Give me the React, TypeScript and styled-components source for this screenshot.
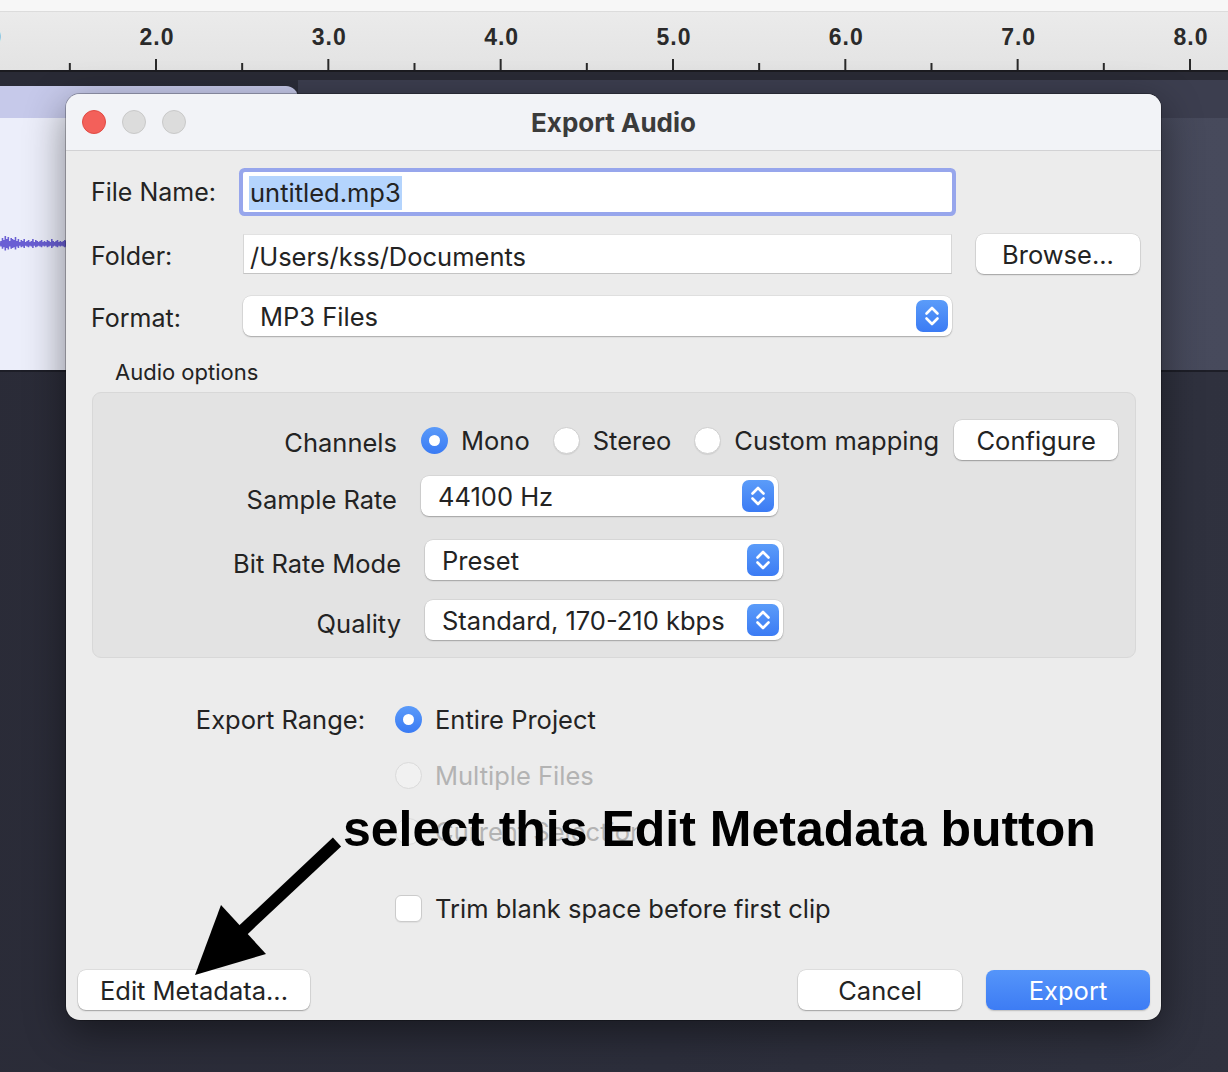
import React from "react";
import styled, { createGlobalStyle, css } from "styled-components";

const GlobalStyle = createGlobalStyle`
  html, body { margin: 0; padding: 0; }
  body {
    width: 1228px;
    height: 1072px;
    overflow: hidden;
    background: #2c2e3a;
    font-family: Inter, "Helvetica Neue", "Liberation Sans", Arial, sans-serif;
  }
  * { box-sizing: border-box; }
`;

const Page = styled.div`
  position: relative;
  width: 1228px;
  height: 1072px;
  overflow: hidden;
  display: flex;
  flex-direction: column;
  background: linear-gradient(100deg, #2a2b37 0%, #2c2e3b 60%, #30323f 100%);
`;

const TopStrip = styled.div`
  height: 12px;
  background: #f7f7f7;
  border-bottom: 1px solid #dcdcdc;
`;

const Ruler = styled.div`
  height: 60px;
  background: linear-gradient(#ebebeb, #e3e3e3);
  border-bottom: 2px solid #1b1b20;
  svg { display: block; }
`;

const TrackGap = styled.div`
  height: 8px;
  background: #292a35;
`;

const TrackRow = styled.div`
  height: 292px;
  display: flex;
  border-bottom: 2px solid #1d1e27;
`;

const Clip = styled.div`
  width: 298px;
  margin-top: 6px;
  display: flex;
  flex-direction: column;
  border-top-right-radius: 12px;
  overflow: hidden;
`;

const ClipHeader = styled.div`
  height: 32px;
  background: #c6c9ea;
`;

const ClipBody = styled.div`
  flex: 1;
  background: #eceefa;
  display: flex;
  align-items: center;
  svg { display: block; }
`;

const TrackRest = styled.div`
  flex: 1;
  display: flex;
  flex-direction: column;
`;

const TrackBand = styled.div`
  height: 38px;
  background: #3c3e4f;
`;

const TrackBody = styled.div`
  flex: 1;
  background: linear-gradient(90deg, #3f4152, #474a5c);
`;

/* ---------- Dialog ---------- */

const Dialog = styled.div`
  position: absolute;
  left: 66px;
  top: 94px;
  width: 1095px;
  height: 926px;
  border-radius: 14px;
  background: #ececec;
  overflow: hidden;
  display: flex;
  flex-direction: column;
  box-shadow: 0 0 0 1px rgba(0, 0, 0, 0.25), 0 12px 40px rgba(0, 0, 0, 0.45);
  color: #232323;
  font-size: 25px;
`;

const TitleBar = styled.div`
  height: 57px;
  flex: none;
  background: #f2f3f7;
  border-bottom: 1px solid #d2d2d4;
  display: grid;
  grid-template-columns: 1fr auto 1fr;
  align-items: center;
  padding: 0 16px;
`;

const Lights = styled.div`
  display: flex;
  gap: 16px;
`;

const Light = styled.span<{ $red?: boolean }>`
  width: 24px;
  height: 24px;
  border-radius: 50%;
  background: ${(p) => (p.$red ? "#f3605a" : "#dcdcdc")};
  border: 1px solid ${(p) => (p.$red ? "#e14a43" : "#c9c9c9")};
`;

const Title = styled.div`
  font-weight: 700;
  font-size: 26px;
  color: #3b3b3b;
`;

const Body = styled.div`
  flex: 1;
  display: flex;
  flex-direction: column;
  padding: 0 11px 10px 12px;
`;

const TopForm = styled.div`
  display: grid;
  grid-template-columns: 128px 709px 164px;
  grid-template-rows: 40px 40px 40px;
  column-gap: 24px;
  row-gap: 22px;
  margin: 21px 0 0 13px;
  align-items: center;
`;

const FormLabel = styled.div<{ $dy?: number }>`
  font-size: 25px;
  color: #232323;
  white-space: nowrap;
  transform: translateY(${(p) => p.$dy ?? 0}px);
`;

const TextField = styled.div<{ $focused?: boolean }>`
  height: 40px;
  background: #fff;
  display: flex;
  align-items: center;
  padding-left: 6px;
  font-size: 25.5px;
  ${(p) =>
    p.$focused
      ? css`
          box-shadow: 0 0 0 4px #97a6ec;
          border-radius: 2px;
          padding-top: 2px;
        `
      : css`
          border: 1px solid #d6d6d6;
          border-bottom-color: #c4c4c4;
          border-top-color: #e2e2e2;
          padding-top: 5px;
        `}
`;

const Selected = styled.span`
  background: #b4d4fd;
  line-height: 34px;
  padding: 0 1px;
`;

const PushButton = styled.button<{ $primary?: boolean; $w?: number }>`
  width: ${(p) => p.$w ?? 164}px;
  height: 40px;
  border: none;
  border-radius: 8px;
  font-family: inherit;
  font-size: 25.5px;
  padding: 0;
  background: #fff;
  color: #232323;
  box-shadow: 0 1px 1.5px rgba(0, 0, 0, 0.28), 0 0 0 0.5px rgba(0, 0, 0, 0.12);
  ${(p) =>
    p.$primary &&
    css`
      background: linear-gradient(#5595fa, #3d7cf4);
      color: #fff;
      box-shadow: 0 1px 1.5px rgba(0, 0, 0, 0.2);
    `}
`;

const SelectBox = styled.div<{ $w?: number }>`
  width: ${(p) => (p.$w ? `${p.$w}px` : "auto")};
  height: 40px;
  background: #fff;
  border-radius: 8px;
  box-shadow: 0 1px 1.5px rgba(0, 0, 0, 0.25), 0 0 0 0.5px rgba(0, 0, 0, 0.1);
  display: flex;
  align-items: center;
  justify-content: space-between;
  padding: 0 4px 0 17px;
  font-size: 25.5px;
  svg { display: block; }
`;

const SectionCaption = styled.div`
  font-size: 22px;
  color: #232323;
  margin: 23px 0 0 37px;
  line-height: 26px;
`;

const Group = styled.div`
  margin: 7px 14px 0 14px;
  height: 266px;
  background: #e3e3e3;
  border: 1px solid #d8d8d8;
  border-radius: 9px;
  padding-top: 27px;
  display: flex;
  flex-direction: column;
  font-size: 25.5px;
`;

const GroupRow = styled.div<{ $shift?: number; $mt?: number }>`
  display: flex;
  align-items: center;
  height: 40px;
  margin-top: ${(p) => p.$mt ?? 0}px;
  padding-left: ${(p) => p.$shift ?? 0}px;
`;

const GroupLabel = styled.div<{ $dy?: number }>`
  width: 304px;
  text-align: right;
  margin-right: 24px;
  transform: translateY(${(p) => p.$dy ?? 0}px);
`;

const RadioGroup = styled.div`
  display: flex;
  align-items: center;
  gap: 23px;
`;

const Option = styled.label<{ $disabled?: boolean }>`
  display: flex;
  align-items: center;
  gap: 13px;
  color: ${(p) => (p.$disabled ? "#b3b3b3" : "#232323")};
`;

type RadioState = "on" | "off" | "disabled";

const Radio = styled.span<{ $state: RadioState }>`
  position: relative;
  width: 27px;
  height: 27px;
  border-radius: 50%;
  flex: none;
  ${(p) =>
    p.$state === "on"
      ? css`
          background: linear-gradient(#5a9af9, #3a7bf4);
          &::after {
            content: "";
            position: absolute;
            left: 50%;
            top: 50%;
            width: 11px;
            height: 11px;
            margin: -5.5px 0 0 -5.5px;
            border-radius: 50%;
            background: #fff;
          }
        `
      : p.$state === "off"
      ? css`
          background: #fff;
          border: 1px solid #cfcfcf;
          box-shadow: 0 1px 1px rgba(0, 0, 0, 0.08);
        `
      : css`
          background: #f1f1f1;
          border: 1px solid #dadada;
        `}
`;

const ConfigureButton = styled(PushButton)`
  margin-left: 15px;
`;

const RangeGrid = styled.div`
  display: grid;
  grid-template-columns: 287px auto;
  grid-auto-rows: 27px;
  column-gap: 30px;
  row-gap: 29px;
  margin-top: 48px;
  align-items: center;
  font-size: 25.5px;
`;

const RangeLabel = styled.div`
  text-align: right;
`;

const TrimRow = styled.label`
  display: flex;
  align-items: center;
  gap: 13px;
  margin: 48px 0 0 317px;
  font-size: 25.5px;
`;

const CheckBox = styled.span`
  width: 27px;
  height: 27px;
  border-radius: 6px;
  background: #fff;
  border: 1px solid #cbcbcb;
  box-shadow: 0 1px 1px rgba(0, 0, 0, 0.06);
`;

const Footer = styled.div`
  margin-top: auto;
  display: flex;
  align-items: center;
  gap: 24px;
`;

const Spacer = styled.div`
  flex: 1;
`;

/* ---------- Annotation overlay ---------- */

const Annotation = styled.div`
  position: absolute;
  left: 343px;
  top: 804px;
  font-family: "Liberation Sans", Arial, sans-serif;
  font-weight: 700;
  font-size: 50px;
  line-height: 50px;
  color: #000;
  white-space: nowrap;
`;

const ArrowSvg = styled.svg`
  position: absolute;
  left: 0;
  top: 0;
  pointer-events: none;
`;

/* ---------- Drawings ---------- */

const STEP = 172.33;
const RULER_START = 157 - STEP;

function RulerDrawing() {
  const labels = [];
  const ticks = [];
  for (let i = 0; i < 8; i++) {
    const x = RULER_START + i * STEP;
    labels.push(
      <text
        key={`l${i}`}
        x={x}
        y={33}
        textAnchor="middle"
        fontFamily="'Liberation Sans', Arial, sans-serif"
        fontWeight={700}
        fontSize={23}
        letterSpacing={1}
        fill="#2a2a2a"
      >
        {`${i + 1}.0`}
      </text>
    );
    ticks.push(<line key={`t${i}`} x1={x - 1} x2={x - 1} y1={47} y2={58} stroke="#2a2a2a" strokeWidth={2} />);
    const m = x - 1 + STEP / 2;
    ticks.push(<line key={`m${i}`} x1={m} x2={m} y1={51} y2={58} stroke="#2a2a2a" strokeWidth={2} />);
  }
  return (
    <svg width={1228} height={58} viewBox="0 0 1228 58">
      {labels}
      {ticks}
    </svg>
  );
}

const WAVE = [3, 6, 4, 8, 5, 7, 3, 6, 5, 4, 7, 3, 5, 2, 4, 3, 5, 2, 3, 4, 2, 3, 5, 2, 4, 3, 2, 3, 4, 2, 3, 2, 4, 3, 2, 5, 3, 2, 3, 4, 2, 3, 2, 3, 4, 3];

function Waveform() {
  let d = "";
  WAVE.forEach((a, i) => {
    const x = 1 + i * 1.45;
    d += `M${x.toFixed(1)} ${12 - a} L${x.toFixed(1)} ${12 + a * 0.8} `;
  });
  return (
    <svg width={70} height={24} viewBox="0 0 70 24">
      <line x1={0} x2={70} y1={12} y2={12} stroke="#6a5fd4" strokeWidth={3} />
      <path d={d} stroke="#6a5fd4" strokeWidth={1.6} fill="none" />
    </svg>
  );
}

function Stepper() {
  return (
    <svg width={32} height={32} viewBox="0 0 32 32">
      <defs>
        <linearGradient id="stepGrad" x1="0" y1="0" x2="0" y2="1">
          <stop offset="0" stopColor="#5b9cf9" />
          <stop offset="1" stopColor="#3b7bf4" />
        </linearGradient>
      </defs>
      <rect x={0} y={0} width={32} height={32} rx={7} fill="url(#stepGrad)" />
      <path
        d="M10.5 13.5 L16 8 L21.5 13.5 M10.5 18.5 L16 24 L21.5 18.5"
        stroke="#fff"
        strokeWidth={2.6}
        strokeLinecap="round"
        strokeLinejoin="round"
        fill="none"
      />
    </svg>
  );
}

function Select({ value, w }: { value: string; w?: number }) {
  return (
    <SelectBox $w={w}>
      <span>{value}</span>
      <Stepper />
    </SelectBox>
  );
}

export default function App() {
  return (
    <>
      <GlobalStyle />
      <Page>
        <TopStrip />
        <Ruler>
          <RulerDrawing />
        </Ruler>
        <TrackGap />
        <TrackRow>
          <Clip>
            <ClipHeader />
            <ClipBody>
              <Waveform />
            </ClipBody>
          </Clip>
          <TrackRest>
            <TrackBand />
            <TrackBody />
          </TrackRest>
        </TrackRow>

        <Dialog>
          <TitleBar>
            <Lights>
              <Light $red />
              <Light />
              <Light />
            </Lights>
            <Title>Export Audio</Title>
            <div />
          </TitleBar>
          <Body>
            <TopForm>
              <FormLabel>File Name:</FormLabel>
              <TextField $focused>
                <Selected>untitled.mp3</Selected>
              </TextField>
              <div />
              <FormLabel $dy={2}>Folder:</FormLabel>
              <TextField>/Users/kss/Documents</TextField>
              <PushButton>Browse...</PushButton>
              <FormLabel $dy={2}>Format:</FormLabel>
              <Select value="MP3 Files" />
              <div />
            </TopForm>

            <SectionCaption>Audio options</SectionCaption>
            <Group>
              <GroupRow>
                <GroupLabel $dy={2}>Channels</GroupLabel>
                <RadioGroup>
                  <Option>
                    <Radio $state="on" />
                    Mono
                  </Option>
                  <Option>
                    <Radio $state="off" />
                    Stereo
                  </Option>
                  <Option>
                    <Radio $state="off" />
                    Custom mapping
                  </Option>
                </RadioGroup>
                <ConfigureButton>Configure</ConfigureButton>
              </GroupRow>
              <GroupRow $mt={16}>
                <GroupLabel $dy={3}>Sample Rate</GroupLabel>
                <Select value="44100 Hz" w={357} />
              </GroupRow>
              <GroupRow $mt={24} $shift={4}>
                <GroupLabel $dy={3}>Bit Rate Mode</GroupLabel>
                <Select value="Preset" w={358} />
              </GroupRow>
              <GroupRow $mt={20} $shift={4}>
                <GroupLabel $dy={3}>Quality</GroupLabel>
                <Select value="Standard, 170-210 kbps" w={358} />
              </GroupRow>
            </Group>

            <RangeGrid>
              <RangeLabel>Export Range:</RangeLabel>
              <Option>
                <Radio $state="on" />
                Entire Project
              </Option>
              <div />
              <Option $disabled>
                <Radio $state="disabled" />
                Multiple Files
              </Option>
              <div />
              <Option $disabled>
                <Radio $state="disabled" />
                Current Selection
              </Option>
            </RangeGrid>

            <TrimRow>
              <CheckBox />
              Trim blank space before first clip
            </TrimRow>

            <Footer>
              <PushButton $w={232}>Edit Metadata...</PushButton>
              <Spacer />
              <PushButton>Cancel</PushButton>
              <PushButton $primary>Export</PushButton>
            </Footer>
          </Body>
        </Dialog>

        <Annotation>select this Edit Metadata button</Annotation>
        <ArrowSvg width={1228} height={1072} viewBox="0 0 1228 1072">
          <line x1={337} y1={842} x2={240} y2={933} stroke="#000" strokeWidth={12} />
          <polygon points="195,975 221,905 266,954" fill="#000" />
        </ArrowSvg>
      </Page>
    </>
  );
}
